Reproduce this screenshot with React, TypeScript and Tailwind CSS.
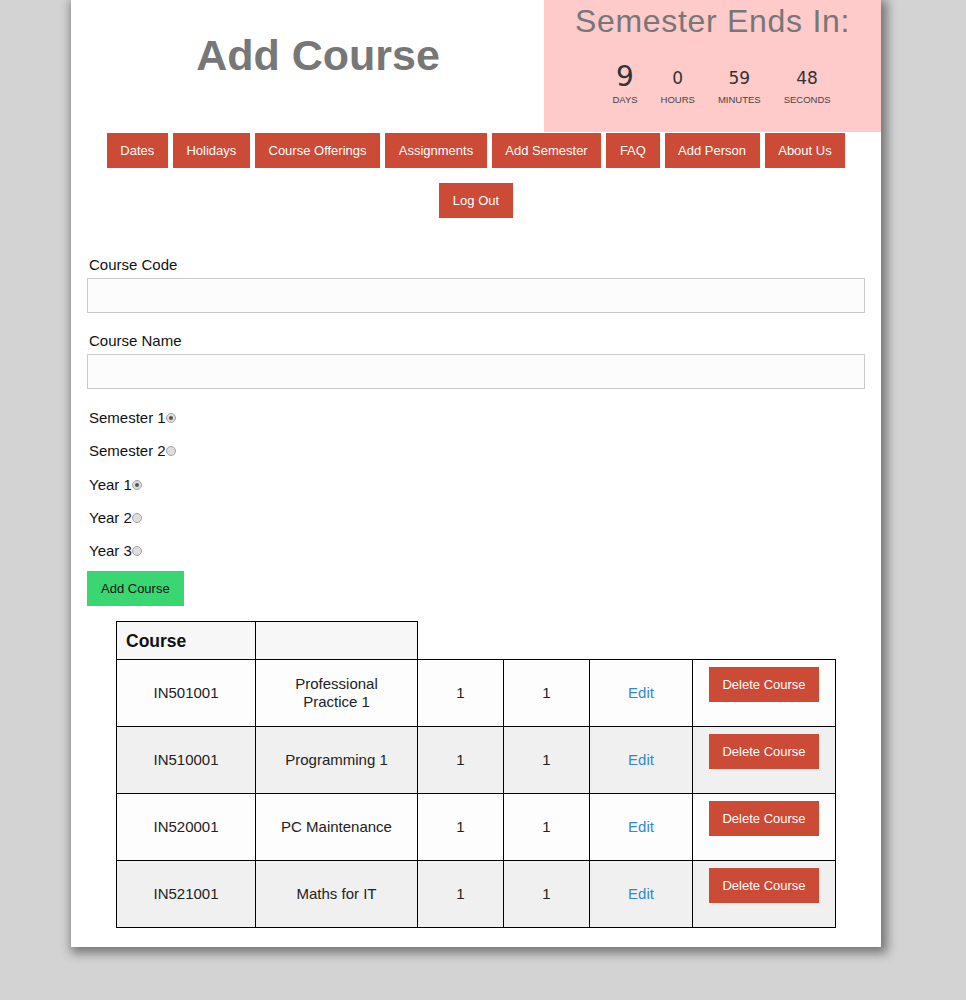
import React from "react";

const navItems = ["Dates", "Holidays", "Course Offerings", "Assignments", "Add Semester", "FAQ", "Add Person", "About Us", "Log Out"];

const countdown = [
    { value: "9", label: "DAYS", big: true },
    { value: "0", label: "HOURS", big: false },
    { value: "59", label: "MINUTES", big: false },
    { value: "48", label: "SECONDS", big: false },
];

const radios = [
    { label: "Semester 1", checked: true },
    { label: "Semester 2", checked: false },
    { label: "Year 1", checked: true },
    { label: "Year 2", checked: false },
    { label: "Year 3", checked: false },
];

const courses = [
    { code: "IN501001", name: "Professional Practice 1" },
    { code: "IN510001", name: "Programming 1" },
    { code: "IN520001", name: "PC Maintenance" },
    { code: "IN521001", name: "Maths for IT" },
];

function Radio({ checked }: { checked: boolean }) {
    return (
        <span className="flex items-center justify-center w-[10px] h-[10px] rounded-full border border-[#a3a3a3] bg-[#dedede]">
            {checked && <span className="w-[4px] h-[4px] rounded-full bg-[#555]" />}
        </span>
    );
}

function Header() {
    return (
        <div className="flex h-[132px]">
            <div className="flex-1 pl-[21px] pt-[31px] text-center">
                <h1 className="text-[43px] font-bold text-[#777] leading-[48px]">Add Course</h1>
            </div>
            <div className="w-[337px] bg-[#ffcaca] pt-[3px]">
                <div className="text-center text-[32px] tracking-[0.7px] text-[#777] leading-[36px]">Semester Ends In:</div>
                <div className="flex items-end justify-center gap-[23px] pl-[18px] mt-[24px]">
                    {countdown.map((c) => (
                        <div key={c.label} className="flex flex-col items-center">
                            <div
                                className={
                                    c.big
                                        ? "font-['DejaVu_Sans',sans-serif] text-[28px] leading-none text-[#333] mb-[-4px]"
                                        : "font-['DejaVu_Sans',sans-serif] text-[17px] leading-none text-[#333]"
                                }
                            >
                                {c.value}
                            </div>
                            <div className="mt-[8px] text-[9.5px] leading-none text-[#444]">{c.label}</div>
                        </div>
                    ))}
                </div>
            </div>
        </div>
    );
}

function Nav() {
    return (
        <div className="mt-[1px] mx-auto w-[750px] flex flex-wrap justify-center gap-x-[5px] gap-y-[15px]">
            {navItems.map((item) => (
                <button key={item} className="h-[35px] px-[13.6px] bg-[#cc4b37] text-white text-[13px]">
                    {item}
                </button>
            ))}
        </div>
    );
}

function CourseForm() {
    return (
        <div className="px-[16px]">
            <label className="block mt-[38px] pl-[2px] text-[15px] leading-[18px] text-[#111]">Course Code</label>
            <input className="block mt-[4px] w-full h-[35px] border border-[#cbcbcb] bg-[#fcfcfc]" />
            <label className="block mt-[19px] pl-[2px] text-[15px] leading-[18px] text-[#111]">Course Name</label>
            <input className="block mt-[4px] w-full h-[35px] border border-[#cbcbcb] bg-[#fcfcfc]" />
            <div className="mt-[20px] flex flex-col gap-[15.3px] pl-[2px]">
                {radios.map((r) => (
                    <div key={r.label} className="flex items-center text-[15px] leading-[18px] text-[#111]">
                        <span>{r.label}</span>
                        <Radio checked={r.checked} />
                    </div>
                ))}
            </div>
            <button className="mt-[11px] h-[35px] px-[14px] bg-[#39d672] text-[13px] text-[#111]">Add Course</button>
        </div>
    );
}

function CourseTable() {
    return (
        <div className="px-[16px]">
            <table className="mt-[15px] ml-[29px] table-fixed border-collapse w-[719px] text-[15px] text-[#222]">
                <colgroup>
                    <col className="w-[139px]" />
                    <col className="w-[162px]" />
                    <col className="w-[86px]" />
                    <col className="w-[86px]" />
                    <col className="w-[103px]" />
                    <col className="w-[143px]" />
                </colgroup>
                <thead>
                    <tr className="h-[38px]">
                        <th className="border border-black bg-[#f7f7f7] text-left pl-[9px] text-[17.5px] font-bold text-[#111]">Course</th>
                        <th className="border border-black bg-[#f7f7f7]"></th>
                    </tr>
                </thead>
                <tbody>
                    {courses.map((c, i) => (
                        <tr key={c.code} className={i % 2 == 0 ? "h-[67px] bg-[#fdfdfd]" : "h-[67px] bg-[#f0f0f0]"}>
                            <td className="border border-black text-center">{c.code}</td>
                            <td className="border border-black text-center px-[14px] leading-[18px]">{c.name}</td>
                            <td className="border border-black text-center">1</td>
                            <td className="border border-black text-center">1</td>
                            <td className="border border-black text-center text-[#3089cf]">Edit</td>
                            <td className="border border-black text-center align-top pt-[7px]">
                                <button className="h-[35px] w-[110px] bg-[#cc4b37] text-white text-[13px]">Delete Course</button>
                            </td>
                        </tr>
                    ))}
                </tbody>
            </table>
        </div>
    );
}

export default function App() {
    return (
        <div className="min-h-screen bg-[#d3d3d3] font-['Liberation_Sans',Arial,sans-serif]">
            <div className="w-[952px]">
                <div className="mx-auto w-[810px] bg-white pb-[19px] shadow-[3px_3px_10px_3px_rgba(0,0,0,0.45)]">
                    <Header />
                    <Nav />
                    <CourseForm />
                    <CourseTable />
                </div>
            </div>
        </div>
    );
}
